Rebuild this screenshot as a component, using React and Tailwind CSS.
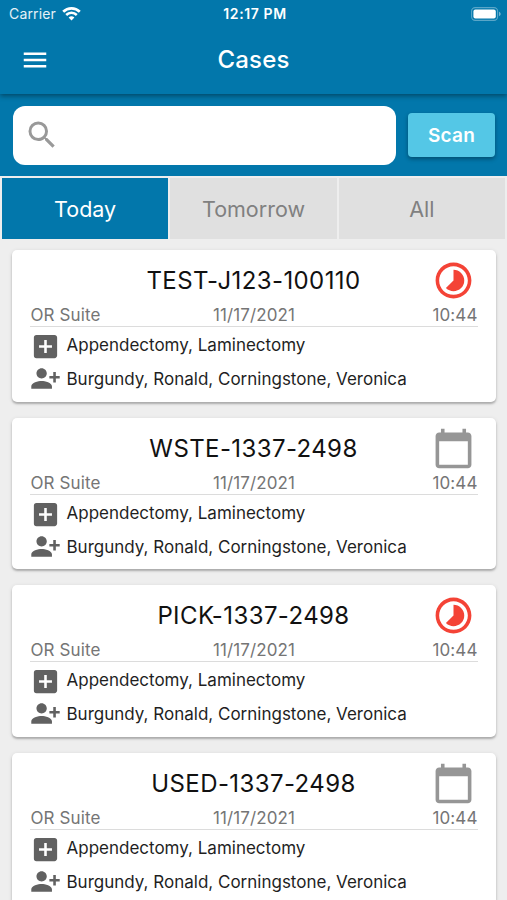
import React, { useState } from 'react';
import { MdAddBox, MdCalendarToday, MdMenu, MdPersonAddAlt1, MdSearch, MdTimelapse } from 'react-icons/md';

const tabs = ['Today', 'Tomorrow', 'All'];

const cases = [
  { id: 'TEST-J123-100110', status: 'active' },
  { id: 'WSTE-1337-2498', status: 'scheduled' },
  { id: 'PICK-1337-2498', status: 'active' },
  { id: 'USED-1337-2498', status: 'scheduled' },
].map((item) => ({
  ...item,
  room: 'OR Suite',
  date: '11/17/2021',
  time: '10:44',
  procedures: 'Appendectomy, Laminectomy',
  staff: 'Burgundy, Ronald, Corningstone, Veronica',
}));

const StatusBar = () => (
  <div className="grid h-[27px] grid-cols-3 items-center pl-[9px] pr-[6px] text-[14px] leading-none">
    <div className="flex items-center gap-1.5 text-white/90">
      <span className="tracking-[0.15px]">Carrier</span>
      <svg width="19" height="14" viewBox="0 0 19 14" fill="none" stroke="white">
        <path d="M1.2 4.8a11.8 11.8 0 0 1 16.6 0" strokeWidth="2.7" />
        <path d="M4.2 8a7.5 7.5 0 0 1 10.6 0" strokeWidth="2.5" />
        <path d="M9.5 13.6 6.600 10.600a4.100 4.100 0 0 1 5.800 0z" fill="white" stroke="none" />
      </svg>
    </div>
    <span className="whitespace-nowrap text-center font-semibold tracking-[0.6px]">12:17 PM</span>
    <svg className="justify-self-end" width="30" height="14" viewBox="0 0 30 14">
      <rect x="0.6" y="0.6" width="26" height="12.8" rx="3.6" fill="none" stroke="white" strokeOpacity="0.35" strokeWidth="1.1" />
      <rect x="2.4" y="2.5" width="22.4" height="9" rx="2" fill="white" />
      <path d="M28 4.800v4.400c1-.4 1.700-1.200 1.700-2.200S29 5.200 28 4.800z" fill="white" fillOpacity="0.45" />
    </svg>
  </div>
);

const CaseCard = ({ item }) => (
  <div className="h-[151.500px] shrink-0 rounded-[5px] bg-white px-[18px] pt-[9px] shadow-[0_2px_2px_rgba(0,0,0,0.22),0_1px_4px_rgba(0,0,0,0.12)]">
    <div className="grid h-[43px] grid-cols-[44px_1fr_44px] items-center">
      <span className="col-start-2 pt-px text-center text-[24px] leading-none tracking-[0.4px] text-[#111]">{item.id}</span>
      <span className="flex justify-end pr-[3px]">
        {item.status === 'active' ? (
          <MdTimelapse className="size-[43px] shrink-0 text-[#f44336]" />
        ) : (
          <MdCalendarToday className="size-[43px] shrink-0 text-[#969696]" />
        )}
      </span>
    </div>
    <div className="grid h-[25px] grid-cols-3 items-center border-b border-[#dcdcdc] pl-px pt-[3px] text-[17px] leading-none tracking-[0.1px] text-[#757575]">
      <span>{item.room}</span>
      <span className="text-center">{item.date}</span>
      <span className="text-right">{item.time}</span>
    </div>
    <div className="mt-1 flex h-8 text-[#616161]">
      <MdAddBox className="size-[31px] shrink-0" />
      <span className="ml-1.5 whitespace-nowrap pt-px text-[17px] leading-[26px] text-[#1f1f1f]">{item.procedures}</span>
    </div>
    <div className="flex h-[31px] items-center text-[#616161]">
      <MdPersonAddAlt1 className="size-[31px] shrink-0" />
      <span className="ml-1.5 whitespace-nowrap pt-0.5 text-[17px] leading-none text-[#1f1f1f]">{item.staff}</span>
    </div>
  </div>
);

const App = () => {
  const [activeTab, setActiveTab] = useState('Today');

  return (
    <div className="flex h-screen flex-col overflow-hidden bg-[#eeeeee] font-['Inter',sans-serif]">
      <header className="relative z-10 flex h-[94px] shrink-0 flex-col gap-px bg-[#0277ab] text-white shadow-[0_2px_5px_rgba(0,0,0,0.4)]">
        <StatusBar />
        <div className="grid h-16 grid-cols-[50px_1fr_50px] items-center">
          <button className="flex pl-5">
            <MdMenu className="size-[30px] shrink-0" />
          </button>
          <h1 className="text-center text-[24px] font-medium leading-none tracking-[0.2px]">Cases</h1>
        </div>
      </header>

      <div className="flex h-[82px] shrink-0 items-center gap-3 bg-[#0277ab] pl-[13px] pr-[12px]">
        <label className="flex h-[59px] flex-1 items-center rounded-[12px] bg-white pl-[11px]">
          <MdSearch className="size-9 shrink-0 text-[#999999]" />
          <input className="min-w-0 flex-1 bg-transparent px-2 text-lg outline-none" />
        </label>
        <button className="h-11 w-[87px] rounded-[4px] bg-[#54c7e6] pt-0.5 text-[19px] font-semibold tracking-[0.2px] text-white shadow-[0_2px_4px_rgba(0,0,0,0.35)]">
          Scan
        </button>
      </div>

      <div className="grid h-[63px] shrink-0 grid-cols-3 gap-0.5 px-0.5 pt-0.5">
        {tabs.map((tab) => (
          <button
            key={tab}
            onClick={() => setActiveTab(tab)}
            className={`pt-0.5 text-[21.500px] ${activeTab === tab ? 'bg-[#0277ab] text-white' : 'bg-[#e0e0e0] text-[#808080]'}`}
          >
            {tab}
          </button>
        ))}
      </div>

      <main className="flex min-h-0 flex-1 flex-col gap-4 overflow-hidden px-[11.500px] pt-[11px]">
        {cases.map((item) => (
          <CaseCard key={item.id} item={item} />
        ))}
      </main>
    </div>
  );
};

export default App;
